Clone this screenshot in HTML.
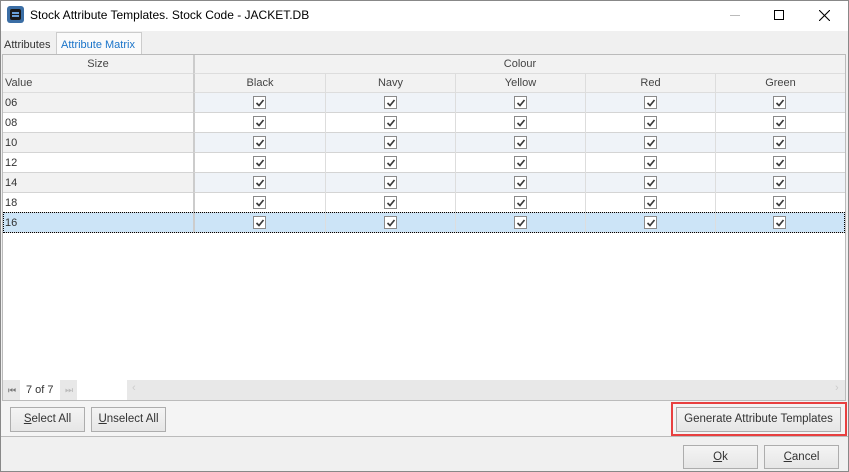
<!DOCTYPE html>
<html><head><meta charset="utf-8"><style>
*{box-sizing:border-box;margin:0;padding:0}
body{width:849px;height:472px;background:#f0f0f0;font-family:"Liberation Sans",sans-serif;font-size:11px;color:#222;position:relative;overflow:hidden}
.a{position:absolute}
.cb{position:absolute;width:13px;height:13px;border:1px solid #8a8a8a;background:#fff}
.cb svg{position:absolute;left:1px;top:1px}
.btn{position:absolute;border:1px solid #adadad;background:linear-gradient(#f4f4f4,#e6e6e6);text-align:center;font-size:11.5px;color:#333;line-height:22px}
.hd{position:absolute;text-align:center;color:#444;line-height:18px;background:#f2f2f2}
</style></head><body>
<div class="a" style="left:0;top:0;width:849px;height:31px;background:#fff"></div>
<svg class="a" style="left:7px;top:6px" width="17" height="17"><rect x="0" y="0" width="17" height="17" rx="3" fill="#3b6ea5"/><rect x="3" y="3" width="11" height="11" rx="2" fill="#1a1a1a"/><rect x="5" y="6" width="7" height="2" fill="#6aa0d8"/><rect x="5" y="9" width="7" height="2" fill="#6aa0d8"/></svg>
<div class="a" style="left:30px;top:8px;font-size:12px;color:#000">Stock Attribute Templates. Stock Code - JACKET.DB</div>
<div class="a" style="left:730px;top:15px;width:10px;height:1px;background:#bbb"></div>
<div class="a" style="left:774px;top:10px;width:10px;height:10px;border:1px solid #000"></div>
<svg class="a" style="left:819px;top:10px" width="11" height="11"><path d="M0 0L11 11M11 0L0 11" stroke="#000" stroke-width="1.1"/></svg>
<div class="a" style="left:4px;top:39px;color:#333">Attributes</div>
<div class="a" style="left:56px;top:32px;width:86px;height:23px;border:1px solid #ccc;border-bottom:none;background:#fafafa;color:#1a74c9;padding:6px 0 0 4px">Attribute Matrix</div>
<div class="a" style="left:2px;top:54px;width:844px;height:347px;border:1px solid #bbb;background:#fff"></div>
<div class="hd" style="left:3px;top:55px;width:190px;height:19px;border-bottom:1px solid #ddd">Size</div>
<div class="hd" style="left:3px;top:74px;width:190px;height:19px;text-align:left;padding-left:2px;border-bottom:1px solid #ddd">Value</div>
<div class="hd" style="left:193px;top:55px;width:652px;height:19px;border-left:2px solid #ccc;border-bottom:1px solid #ddd">Colour</div>
<div class="hd" style="left:193px;top:74px;width:132px;height:19px;border-left:2px solid #ccc;border-bottom:1px solid #ddd">Black</div>
<div class="hd" style="left:325px;top:74px;width:130px;height:19px;border-left:1px solid #ddd;border-bottom:1px solid #ddd">Navy</div>
<div class="hd" style="left:455px;top:74px;width:130px;height:19px;border-left:1px solid #ddd;border-bottom:1px solid #ddd">Yellow</div>
<div class="hd" style="left:585px;top:74px;width:130px;height:19px;border-left:1px solid #ddd;border-bottom:1px solid #ddd">Red</div>
<div class="hd" style="left:715px;top:74px;width:130px;height:19px;border-left:1px solid #ddd;border-bottom:1px solid #ddd">Green</div>
<div id="rows"></div>
<script>
var vals=["06","08","10","12","14","18","16"],h="",cx=[259,390,520,650,779],lines=[325,455,585,715];
vals.forEach(function(v,i){var y=93+i*20,sel=i==6,bg1=sel?"#cce4f7":(i%2==0?"#f2f2f2":"#fff"),bg2=sel?"#cce4f7":(i%2==0?"#eff3f8":"#fff");
h+='<div class="a" style="left:3px;top:'+y+'px;width:190px;height:20px;background:'+bg1+';border-bottom:1px solid #d4d4d4;padding:4px 2px;color:#333">'+v+'</div>';
h+='<div class="a" style="left:193px;top:'+y+'px;width:652px;height:20px;background:'+bg2+';border-left:2px solid #ccc;border-bottom:1px solid #d4d4d4"></div>';
lines.forEach(function(x){h+='<div class="a" style="left:'+x+'px;top:'+y+'px;width:1px;height:20px;background:#ddd"></div>'});
cx.forEach(function(x){h+='<div class="cb" style="left:'+(x-6)+'px;top:'+(y+3)+'px"><svg width="10" height="10"><path d="M1.5 5L4 7.5L8.5 2" stroke="#3a3a3a" stroke-width="1.7" fill="none"/></svg></div>'});
if(sel)h+='<div class="a" style="left:3px;top:'+(y-1)+'px;width:842px;height:21px;border:1px dotted #000"></div>';});
document.getElementById("rows").innerHTML=h;
</script>
<div class="a" style="left:3px;top:380px;width:842px;height:20px;background:#e8e8e8"></div>
<div class="a" style="left:4px;top:381px;width:16px;height:18px;color:#777;font-size:9px;line-height:18px;text-align:center">⏮</div>
<div class="a" style="left:20px;top:380px;width:40px;height:20px;background:#fff;line-height:20px;padding-left:6px;color:#333">7 of 7</div>
<div class="a" style="left:61px;top:381px;width:16px;height:18px;color:#bbb;font-size:9px;line-height:18px;text-align:center">⏭</div>
<div class="a" style="left:77px;top:380px;width:50px;height:20px;background:#fff"></div>
<div class="a" style="left:132px;top:382px;color:#ccc">‹</div>
<div class="a" style="left:835px;top:382px;color:#ccc">›</div>
<div class="a" style="left:0;top:401px;width:849px;height:36px;background:#f4f4f4;border-bottom:1px solid #bbb"></div>
<div class="btn" style="left:10px;top:407px;width:75px;height:25px"><u>S</u>elect All</div>
<div class="btn" style="left:91px;top:407px;width:75px;height:25px"><u>U</u>nselect All</div>
<div class="a" style="left:671px;top:402px;width:176px;height:34px;border:2px solid #e84040"></div>
<div class="btn" style="left:676px;top:407px;width:165px;height:25px">Generate Attribute Templates</div>
<div class="btn" style="left:683px;top:445px;width:75px;height:24px"><u>O</u>k</div>
<div class="btn" style="left:764px;top:445px;width:75px;height:24px"><u>C</u>ancel</div>
<div class="a" style="left:0;top:0;width:849px;height:472px;border:1px solid #888"></div>
</body></html>
